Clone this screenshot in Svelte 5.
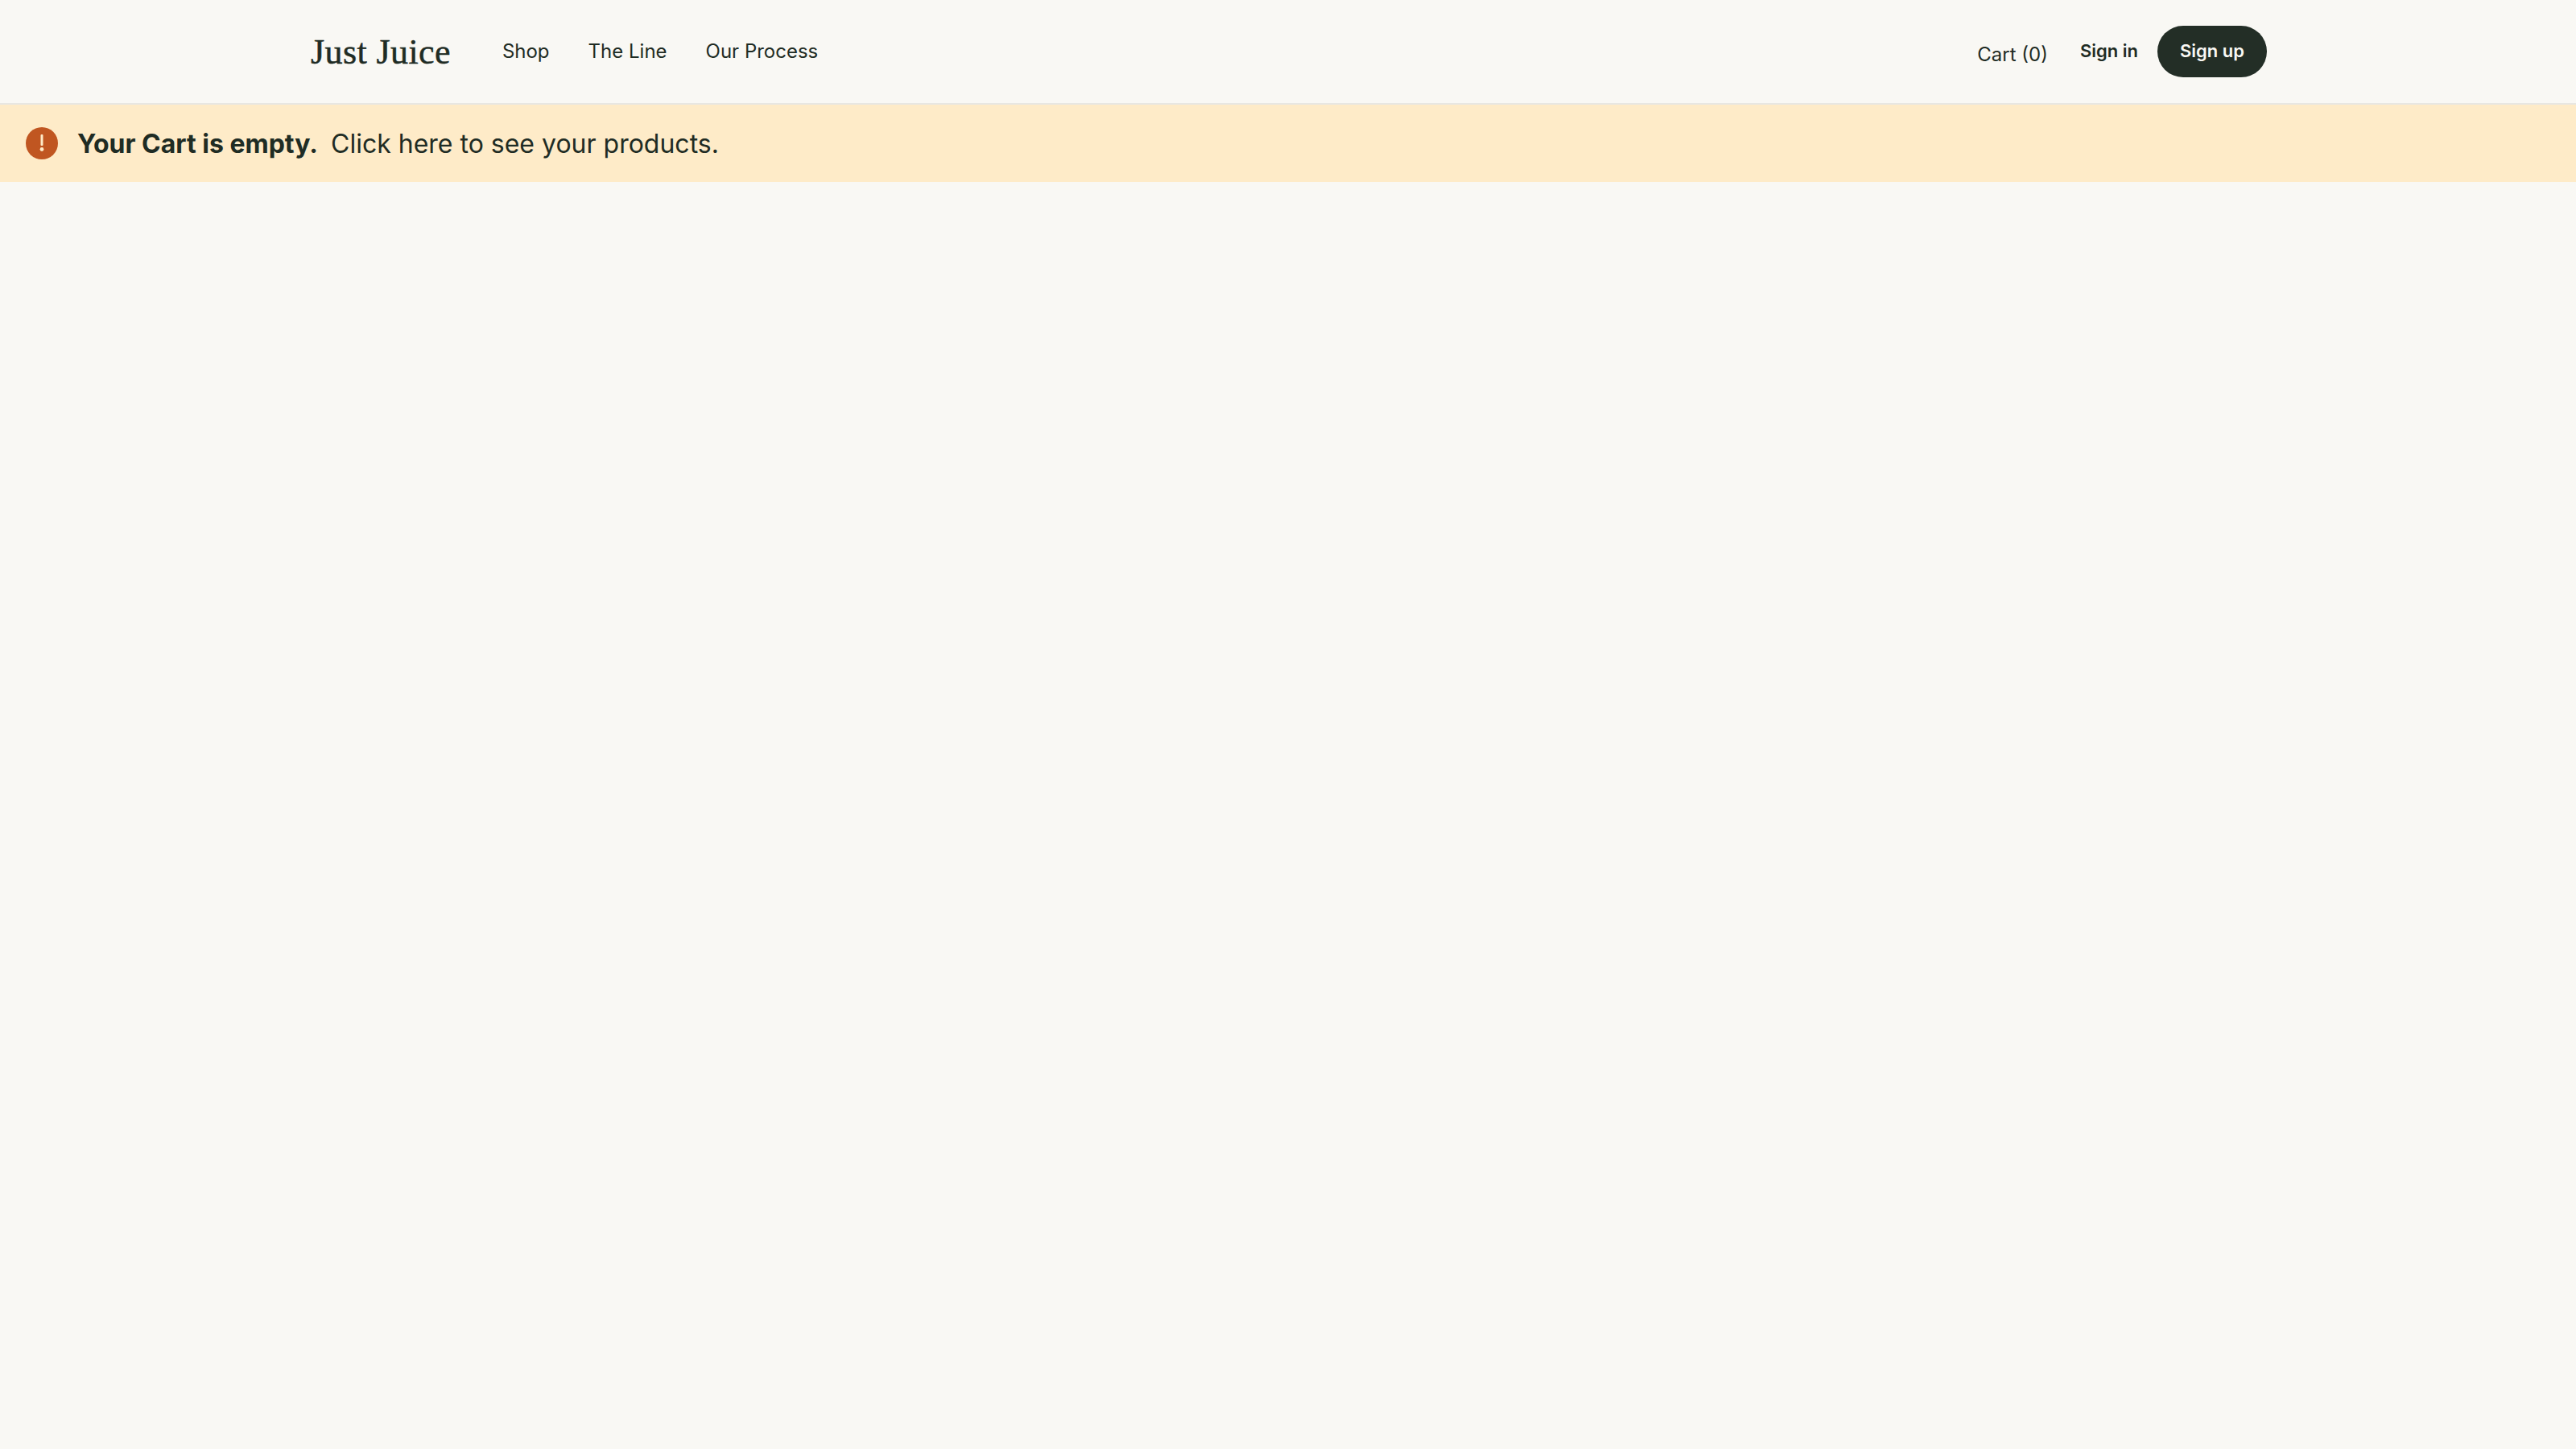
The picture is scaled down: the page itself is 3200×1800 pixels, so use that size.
<script>
	let cartCount = 0;
	const links = ['Shop', 'The Line', 'Our Process'];
</script>

<header class="header">
	<div class="inner">
		<a class="logo" href="#home">Just Juice</a>
		<nav class="nav">
			{#each links as link}
				<a href="#{link}">{link}</a>
			{/each}
		</nav>
		<div class="actions">
			<a class="cart" href="#cart">Cart ({cartCount})</a>
			<a class="signin" href="#signin">Sign in</a>
			<a class="signup" href="#signup">Sign up</a>
		</div>
	</div>
</header>

<div class="banner">
	<svg class="alert" width="40" height="40" viewBox="0 0 40 40" aria-hidden="true">
		<circle cx="20" cy="20" r="20" fill="#c05621" />
		<rect x="18.5" y="9" width="3" height="14" rx="1" fill="#feebc8" />
		<circle cx="20" cy="27.5" r="2.4" fill="#feebc8" />
	</svg>
	<p><strong>Your Cart is empty.</strong> <a href="#products">Click here to see your products.</a></p>
</div>

<style>
	:global(body) {
		margin: 0;
		min-height: 1800px;
		background: #f9f8f4;
		color: #1f2c24;
		font-family: Inter, 'Liberation Sans', sans-serif;
	}

	a {
		color: inherit;
		text-decoration: none;
	}

	.header {
		height: 128px;
		border-bottom: 2px solid #e8e7e2;
	}

	.inner {
		width: 2432px;
		height: 100%;
		margin: 0 auto;
		display: flex;
		align-items: center;
	}

	.logo {
		font-family: 'Liberation Serif', serif;
		font-size: 44px;
		letter-spacing: 0.4px;
		-webkit-text-stroke: 0.5px currentColor;
		margin: 0 64px 0 2px;
	}

	.nav {
		display: flex;
		gap: 48px;
		font-size: 24px;
		margin-top: -2px;
	}

	.actions {
		margin-left: auto;
		display: flex;
		align-items: center;
	}

	.cart {
		font-size: 24px;
		margin-right: 40px;
		padding-top: 7px;
	}

	.signin {
		font-size: 22px;
		font-weight: 600;
		margin: -2px 24px 0 0;
	}

	.signup {
		height: 64px;
		padding: 0 28px 2px;
		box-sizing: border-box;
		display: flex;
		align-items: center;
		border-radius: 32px;
		background: #232e26;
		color: #f9f8f4;
		font-size: 22px;
		font-weight: 600;
	}

	.banner {
		height: 96px;
		display: flex;
		align-items: center;
		padding-left: 32px;
		background: #feebc8;
	}

	.alert {
		margin-right: 24px;
	}

	.banner p {
		margin: 0;
		font-size: 32px;
		white-space: pre-wrap;
	}

	.banner strong {
		font-weight: 700;
		margin-right: 7px;
	}
</style>
